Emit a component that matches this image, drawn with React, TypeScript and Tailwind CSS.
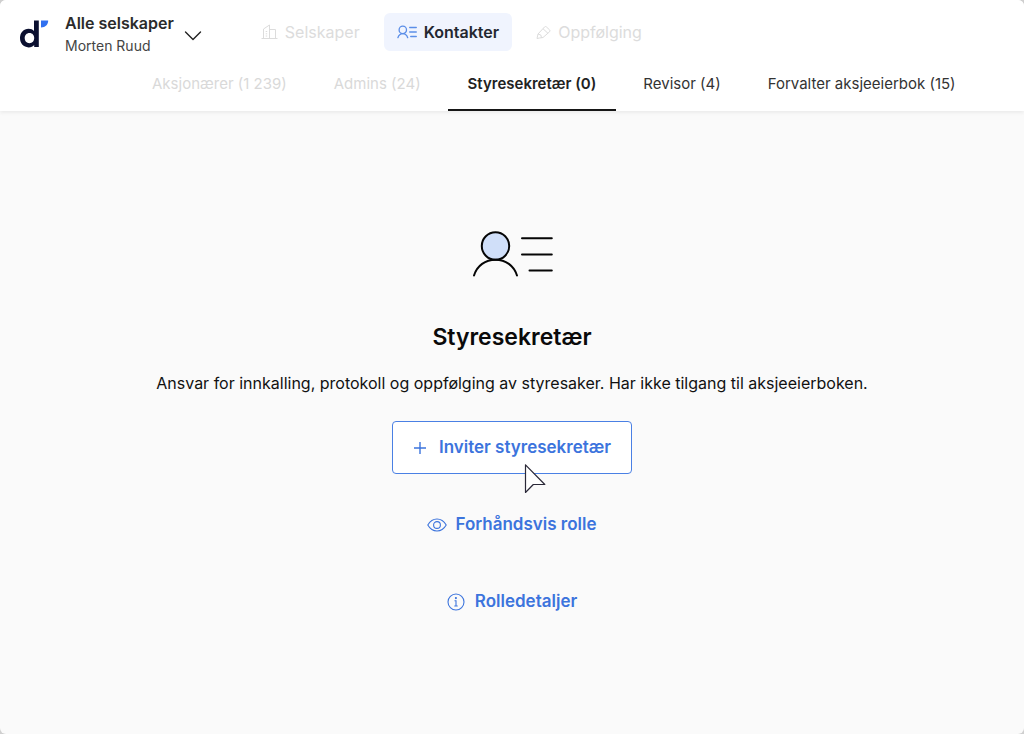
import React from "react";

function Logo() {
  return (
    <svg viewBox="0 0 30 30" className="size-[30px] shrink-0" role="img" aria-label="Logo">
      <path
        fillRule="evenodd"
        fill="#0b1030"
        d="M15 1.5h4.800V28H15.200v-2.100C13.900 27.500 12 28.400 9.600 28.400 4.600 28.400 1 24.400 1 19.100S4.600 9.800 9.600 9.800c2.300 0 4.100.8 5.400 2.300zM10.500 14c-2.900 0-4.800 2.200-4.800 5.100s1.900 5.100 4.800 5.100 4.700-2.200 4.700-5.100-1.800-5.100-4.700-5.100z"
      />
      <path fill="#3070f0" d="M22 1.500h7.200c0 4-2.800 7-7.200 7z" />
    </svg>
  );
}

function BuildingIcon() {
  return (
    <svg viewBox="0 0 17 16" className="h-4 w-[17px]" fill="none" stroke="currentColor" strokeWidth="1" aria-hidden="true">
      <path d="M.5 14.500h16M2.500 14.500v-9.500l6-4v13.500M8.500 5.500h6v9M4.700 7.500h1.500M4.700 9.800h1.500M4.700 12h1.500" />
    </svg>
  );
}

function ContactIcon() {
  return (
    <svg viewBox="0 0 20 14" className="h-3.5 w-5 text-[#5b8ee8]" fill="none" stroke="currentColor" strokeWidth="1.300" strokeLinecap="round" aria-hidden="true">
      <circle cx="5.800" cy="4.900" r="3.700" />
      <path d="M.9 12.700c.8-2.500 2.600-4.100 4.900-4.100s4.100 1.600 4.900 4.100M12.700 2.500h6.600M12.700 7h6.600M13.700 11.500h5.600" />
    </svg>
  );
}

function PencilIcon() {
  return (
    <svg viewBox="0 0 15 15" className="size-[15px]" fill="none" stroke="currentColor" strokeWidth="1" strokeLinejoin="round" aria-hidden="true">
      <path d="M1 13.500l1-4.500 6.500-7q1-1 2 0l3 2.800q1 1 0 2L7 12.500l-3.500.5zM7 3.700l5 4.700M2 9l2.800 1 .7 2.700" />
    </svg>
  );
}

function RoleIllustration() {
  return (
    <svg viewBox="-1 1 82 48" className="h-12 w-[82px]" fill="none" stroke="#050505" strokeWidth="2" strokeLinecap="round" aria-hidden="true">
      <circle cx="23.500" cy="16" r="13.700" fill="#d0dff9" />
      <path d="M2 45.500c3-9.800 11.500-15.800 21.500-15.800s18.500 6 21.500 15.800M50 8.300h29.800M50 24.500h29.800M57.500 40.500h22.300" />
    </svg>
  );
}

function Cursor() {
  return (
    <svg viewBox="0 0 24 32" className="absolute left-[131px] top-[42px] h-8 w-6" aria-hidden="true">
      <path d="M2.500 1.800v27.700l7.800-8h11.500z" fill="#fff" stroke="#2b2938" strokeWidth="1.200" strokeLinejoin="round" />
    </svg>
  );
}

const tabs = [
  { label: "Aksjonærer (1 239)", state: "muted" },
  { label: "Admins (24)", state: "muted" },
  { label: "Styresekretær (0)", state: "active" },
  { label: "Revisor (4)", state: "normal" },
  { label: "Forvalter aksjeeierbok (15)", state: "normal" },
];

const tabStyles: Record<string, string> = {
  muted: "border-transparent text-[#d9d9d9]",
  active: "border-[#161616] font-semibold text-[#222222]",
  normal: "border-transparent text-[#333333]",
};

export default function App() {
  return (
    <div className="flex min-h-screen flex-col bg-[#cfcfcf] font-['Inter',sans-serif]">
      <div className="flex grow flex-col overflow-hidden rounded-md bg-[#fafafa]">
        <header className="bg-white shadow-[0_2px_3px_#ececec]">
          <div className="flex h-16 items-center pl-[19px]">
            <div className="flex items-center gap-4 pt-1">
              <Logo />
              <button type="button" className="flex shrink-0 items-center gap-2.5 text-left">
                <span className="flex flex-col">
                  <span className="text-base leading-[23px] font-semibold text-[#2b2b2b]">Alle selskaper</span>
                  <span className="text-sm leading-[22px] text-[#444444]">Morten Ruud</span>
                </span>
                <svg viewBox="0 0 18 10" className="mt-1 h-[10px] w-[18px]" fill="none" stroke="#222222" strokeWidth="1.400" strokeLinecap="round" strokeLinejoin="round" aria-hidden="true">
                  <path d="M1.500 1l7.500 7.500L16.500 1" />
                </svg>
              </button>
            </div>
            <nav aria-label="Hovedmeny" className="ml-[46px] flex items-center gap-[11px] text-base">
              <a href="#selskaper" className="flex h-[38px] items-center gap-[7px] rounded-md px-[13px] text-[#dcdcdc]">
                <BuildingIcon />
                Selskaper
              </a>
              <a href="#kontakter" aria-current="page" className="flex h-[38px] items-center gap-[7px] rounded-md bg-[#f0f4fe] px-[13px] font-semibold text-[#232730]">
                <ContactIcon />
                Kontakter
              </a>
              <a href="#oppfolging" className="flex h-[38px] items-center gap-[7px] rounded-md px-[13px] text-[#dcdcdc]">
                <PencilIcon />
                Oppfølging
              </a>
            </nav>
          </div>
          <nav aria-label="Roller" className="flex gap-[7px] pl-[132px] text-[15px]">
            {tabs.map((t) => (
              <a
                key={t.label}
                href="#rolle"
                aria-current={t.state === "active" ? "page" : undefined}
                className={`flex h-[47px] items-start border-b-2 px-5 pt-2.5 leading-5 whitespace-nowrap ${tabStyles[t.state]}`}
              >
                {t.label}
              </a>
            ))}
          </nav>
        </header>

        <main className="flex flex-col items-center px-6 pt-[120px] text-center">
          <RoleIllustration />
          <h1 className="mt-[42px] text-[23px] leading-8 font-semibold text-[#0a0a0a]">Styresekretær</h1>
          <p className="mt-[18px] text-base leading-6 text-[#111111]">
            Ansvar for innkalling, protokoll og oppfølging av styresaker. Har ikke tilgang til aksjeeierboken.
          </p>
          <div className="relative mt-[26px]">
            <button type="button" className="flex h-[53px] items-center gap-3 rounded-sm border border-[#4a80e4] bg-white px-5 text-[17px] font-semibold text-[#3c74dd]">
              <svg viewBox="0 0 14 14" className="size-3.5" fill="none" stroke="currentColor" strokeWidth="1.400" aria-hidden="true">
                <path d="M7 1v12M1 7h12" />
              </svg>
              Inviter styresekretær
            </button>
            <Cursor />
          </div>
          <button type="button" className="mt-[38px] flex h-[26px] items-center gap-2 text-[17px] font-semibold text-[#3c74dd]">
            <svg viewBox="0 0 20 14" className="h-3.5 w-5" fill="none" stroke="currentColor" strokeWidth="1.100" aria-hidden="true">
              <path d="M.8 7C3 3.200 6.200 1 10 1s7 2.200 9.200 6C17 10.800 13.800 13 10 13S3 10.800.8 7z" />
              <circle cx="10" cy="7" r="3.400" />
            </svg>
            Forhåndsvis rolle
          </button>
          <button type="button" className="mt-[51px] flex h-[26px] items-center gap-2.5 text-[17px] font-semibold text-[#3c74dd]">
            <svg viewBox="0 0 18 18" className="size-[18px]" fill="none" stroke="currentColor" strokeWidth="1.100" aria-hidden="true">
              <circle cx="9" cy="9" r="8" />
              <path d="M7.500 7.800H9V13M7.300 13h3.400" />
              <circle cx="8.900" cy="5.100" r=".5" fill="currentColor" />
            </svg>
            Rolledetaljer
          </button>
        </main>
      </div>
    </div>
  );
}
